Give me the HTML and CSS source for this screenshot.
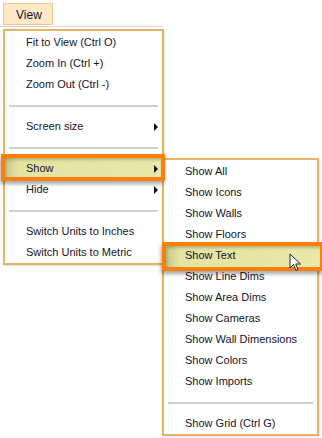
FILE: index.html
```html
<!DOCTYPE html>
<html>
<head>
<meta charset="utf-8">
<link rel="stylesheet" href="styles.css">
</head>
<body>
<div class="menubar">
  <div class="menubtn">View</div>
</div>

<div class="menu main-menu">
  <div class="item">Fit to View (Ctrl O)</div>
  <div class="item">Zoom In (Ctrl +)</div>
  <div class="item">Zoom Out (Ctrl -)</div>
  <div class="sep"></div>
  <div class="item sub">Screen size</div>
  <div class="sep"></div>
  <div class="item sub hl">Show</div>
  <div class="item sub">Hide</div>
  <div class="sep"></div>
  <div class="item">Switch Units to Inches</div>
  <div class="item">Switch Units to Metric</div>
</div>

<div class="menu sub-menu">
  <div class="item">Show All</div>
  <div class="item">Show Icons</div>
  <div class="item">Show Walls</div>
  <div class="item">Show Floors</div>
  <div class="item hl">Show Text</div>
  <div class="item">Show Line Dims</div>
  <div class="item">Show Area Dims</div>
  <div class="item">Show Cameras</div>
  <div class="item">Show Wall Dimensions</div>
  <div class="item">Show Colors</div>
  <div class="item">Show Imports</div>
  <div class="sep"></div>
  <div class="item">Show Grid (Ctrl G)</div>
</div>

<svg class="cursor" width="14" height="20" viewBox="0 0 14 20">
  <path d="M1 1 L1 15 L4.5 11.5 L7 17.5 L9 16.5 L6.7 11 L11.5 11 Z" fill="#fff" stroke="#222" stroke-width="1" stroke-linejoin="miter"/>
</svg>
</body>
</html>
```

FILE: styles.css
```css
html, body {
  margin: 0;
  padding: 0;
  background: #ffffff;
}
body {
  width: 322px;
  height: 438px;
  position: relative;
  overflow: hidden;
  font-family: "Liberation Sans", Arial, sans-serif;
  font-size: 11px;
  color: #14142a;
}
.menubar {
  height: 27px;
  border-bottom: 1px solid #d8d8d8;
  width: 163px;
  padding: 3px 0 0 3px;
  box-sizing: border-box;
}
.menubtn {
  width: 50px;
  height: 22px;
  box-sizing: border-box;
  background: #fde8c8;
  border: 1px solid #f0c888;
  font-size: 12px;
  padding: 4px 0 0 12px;
}
.menu {
  position: absolute;
  background: #ffffff;
  border: 2px solid #eab264;
  box-sizing: border-box;
  box-shadow: 1px 1px 2px rgba(0,0,0,0.12);
}
.main-menu {
  left: 3px;
  top: 29px;
  width: 161px;
  height: 236px;
  padding-top: 1px;
}
.sub-menu {
  left: 162px;
  top: 158px;
  width: 157px;
  height: 278px;
  padding-top: 1px;
}
.item {
  height: 21px;
  line-height: 21px;
  padding-left: 21px;
  position: relative;
  white-space: nowrap;
}
.sub::after {
  content: "";
  position: absolute;
  right: 4px;
  top: 7px;
  border-left: 4px solid #111;
  border-top: 4px solid transparent;
  border-bottom: 4px solid transparent;
}
.sep {
  height: 21px;
  position: relative;
}
.sep::before {
  content: "";
  position: absolute;
  left: 4px;
  right: 4px;
  top: 10px;
  height: 2px;
  background: #cfcfcf;
}
.hl {
  z-index: 1;
  isolation: isolate;
}
.hl::before {
  content: "";
  position: absolute;
  border: 4px solid #ff7f0a;
  background: linear-gradient(90deg, #c9c88a 0px, #e4e3a4 14px, #e9e8aa 100%);
  box-shadow: -1px 3px 4px rgba(0,0,0,0.35), inset 1px 2px 3px rgba(90,90,40,0.35);
  z-index: -1;
}
.main-menu .hl::before {
  left: -4px;
  right: -3px;
  top: -4px;
  bottom: -2px;
}
.sub-menu .hl::before {
  left: -2px;
  right: -7px;
  top: -3px;
  bottom: -5px;
}
.cursor {
  position: absolute;
  left: 289px;
  top: 253px;
  z-index: 10;
}
```
